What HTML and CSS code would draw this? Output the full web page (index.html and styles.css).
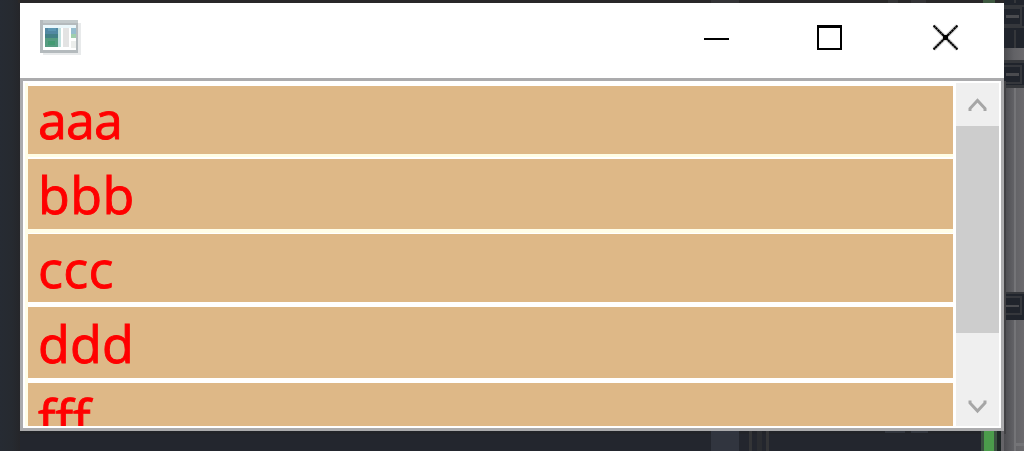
FILE: index.html
```html
<!DOCTYPE html>
<html lang="en">
<head>
<meta charset="utf-8">
<title>List window</title>
<link rel="stylesheet" href="styles.css">
</head>
<body>
<svg class="backdrop" width="1024" height="451" viewBox="0 0 1024 451" shape-rendering="crispEdges">
  <defs>
    <linearGradient id="side"><stop offset="0" stop-color="#262b33"/><stop offset=".6" stop-color="#262a30"/><stop offset="1" stop-color="#25262a"/></linearGradient>
    <linearGradient id="panel"><stop offset="0" stop-color="#4c4c50"/><stop offset=".5" stop-color="#626266"/><stop offset="1" stop-color="#6b6a6d"/></linearGradient>
  </defs>
  <rect width="1024" height="451" fill="#23262e"/>
  <rect width="20" height="451" fill="url(#side)"/>
  <rect x="18" width="986" height="3" fill="#292829"/>
  <path fill="#343436" d="M711 0h28v3h-28zM888 0h10v3h-10zM911 0h15v3h-15z"/>
  <path fill="#3e5840" d="M983 0h12v3h-12z"/>
  <rect x="20" y="431" width="984" height="3" fill="#222429"/>
  <rect x="711" y="431" width="28" height="20" fill="#31353f"/>
  <path fill="#343537" d="M749 431h3v20h-3zM766 431h3v20h-3z"/>
  <path fill="#2b2d31" d="M757 431h5v20h-5z"/>
  <path fill="#30343c" d="M885 431h20v2h-20zM911 431h17v2h-17z"/>
  <rect x="981" y="431" width="17" height="20" fill="#3a5140"/>
  <rect x="984" y="431" width="10" height="20" fill="#4b9c4b"/>
  <rect x="997" y="431" width="4" height="20" fill="#1d2625"/>
  <rect x="1001" y="431" width="23" height="20" fill="#656468"/>
  <rect x="1004" width="20" height="451" fill="url(#panel)"/>
  <path fill="#747477" d="M1014 88h2v204h-2zM1014 320h2v131h-2zM1014 443h10v3h-10z"/>
  <path fill="#20242c" d="M1004 0h20v48h-20zM1004 60h20v28h-20zM1004 292h20v28h-20z"/>
  <path fill="#35373b" d="M1004 5h20v2h-20zM1004 26h20v2h-20zM1004 60h20v3h-20zM1004 85h20v3h-20zM1004 292h20v2h-20zM1014 0h2v3h-2zM1014 30h2v18h-2z"/>
  <g fill="none" stroke="#35373c" stroke-width="2"><path d="M1004 8h17v17h-17M1004 66h17v17h-17M1004 297h17v17h-17"/></g>
  <path fill="#4a4b4f" d="M1006 15h13v3h-13zM1006 73h13v3h-13zM1006 305h13v2h-13z"/>
  <rect x="1004" y="81" width="2" height="353" fill="#414144"/>
</svg>
<main class="window">
  <header class="titlebar">
    <svg class="app-icon" width="42" height="36" viewBox="0 0 42 36" shape-rendering="crispEdges">
      <path fill="#e8eaeb" d="M3 3h38v32H3z"/>
      <path fill="#b4babd" d="M0 0h38v33H0z"/>
      <path fill="#c3cacc" d="M3 0h35v3H3z"/>
      <path fill="#fff" d="M3 5h33v25H3z"/>
      <path fill="#eaf7fb" d="M3 5h33v3H3z"/>
      <path fill="#5288a3" d="M5 8h13v9H5z"/>
      <path fill="#5b96b2" d="M8 8h8v3H8z"/>
      <path fill="#438087" d="M5 14h13v4H5z"/>
      <path fill="#559b81" d="M5 18h13v9H5z"/>
      <path fill="#429a72" d="M8 21h7v4H8z"/>
      <path fill="#c1e0df" d="M18 8h3v19h-3z"/>
      <path fill="#e3e3e3" d="M23 8h6v19h-6z"/>
      <path fill="#96bdcf" d="M31 8h5v6h-5z"/>
      <path fill="#a0cfad" d="M31 14h5v4h-5z"/>
      <path fill="#eceeec" d="M31 21h5v7h-5z"/>
    </svg>
    <div class="controls">
      <svg width="27" height="27" viewBox="0 0 27 27" shape-rendering="crispEdges"><path fill="#000" d="M1 14h25v2H1z"/></svg>
      <svg width="27" height="27" viewBox="0 0 27 27" shape-rendering="crispEdges"><path fill="#000" fill-rule="evenodd" d="M1 1h25v25H1zM3 4v20h21v-20z"/></svg>
      <svg width="27" height="27" viewBox="0 0 27 27"><path fill="none" stroke="#ccc" stroke-width="4" d="M2 2l23 23M25 2L2 25"/><path fill="none" stroke="#000" stroke-width="2" stroke-dasharray="2.600 .3" d="M1.500 1.500l24 24M25.500 1.500l-24 24"/><path d="M11 11h5v5h-5z"/></svg>
    </div>
  </header>
  <section class="content">
    <ul class="list">
      <li class="row row-a">aaa</li>
      <li class="row row-b">bbb</li>
      <li class="row row-c">ccc</li>
      <li class="row row-d">ddd</li>
      <li class="row row-f">fff</li>
    </ul>
    <div class="scrollbar">
      <svg class="arrow" width="43" height="43" viewBox="0 0 43 43"><path d="M14 28v-2.500l7.500-8 7.500 8V28"/></svg>
      <div class="thumb"></div>
      <svg class="arrow arrow-down" width="43" height="43" viewBox="0 0 43 43"><path d="M14 17.500V20l7.500 8 7.500-8v-2.500"/></svg>
    </div>
  </section>
</main>
</body>
</html>
```
FILE: styles.css
```css
* { box-sizing: border-box; }
body {
  margin: 0;
  width: 1024px;
  height: 451px;
  overflow: hidden;
  padding: 3px 20px 20px;
  font-family: "Open Sans", "Noto Sans", sans-serif;
}
.backdrop { position: absolute; top: 0; left: 0; z-index: -1; }
.window {
  width: 984px;
  height: 428px;
  display: flex;
  flex-direction: column;
  background: #fff;
}
.titlebar {
  height: 75px;
  flex: none;
  display: flex;
  justify-content: space-between;
  align-items: flex-start;
  padding: 17px 45px 0 20px;
}
.controls { display: flex; padding-top: 4px; }
.controls svg { display: block; margin-left: 89px; }
.controls svg:nth-child(2) { margin-left: 86px; }
.content {
  flex: 1;
  min-height: 0;
  display: flex;
  justify-content: space-between;
  border: 3px solid #ababad;
  padding: 2px;
}
.list {
  list-style: none;
  margin: 0;
  padding: 3px 0 0 3px;
  width: 930px;
  height: 343px;
  overflow: hidden;
  background: linear-gradient(#fffde8, #fffde8) 0 0 / 3px 100% no-repeat;
}
.row {
  width: 925px;
  margin-bottom: 5px;
  padding-left: 10px;
  background: #deb887;
  color: #f00;
  font-size: 52px;
  -webkit-text-stroke: 0.9px #f00;
}
.row-a { height: 68px; line-height: 66px; letter-spacing: -0.9px; box-shadow: 0 3px #fffde4; }
.row-b { height: 70px; line-height: 69px; letter-spacing: 0.4px; box-shadow: 0 4px #fffde8; }
.row-c { height: 68px; line-height: 68px; letter-spacing: 0.3px; }
.row-d { height: 71px; line-height: 71px; letter-spacing: 0.2px; }
.row-f { height: 43px; line-height: 67px; margin-bottom: 0; }
.scrollbar {
  width: 43px;
  height: 343px;
  background: #efefef;
  display: flex;
  flex-direction: column;
}
.arrow { display: block; flex: none; fill: none; stroke: #a6a6a6; stroke-width: 3; }
.arrow-down { margin-top: auto; }
.thumb { height: 207px; background: #cdcdcd; }
```
